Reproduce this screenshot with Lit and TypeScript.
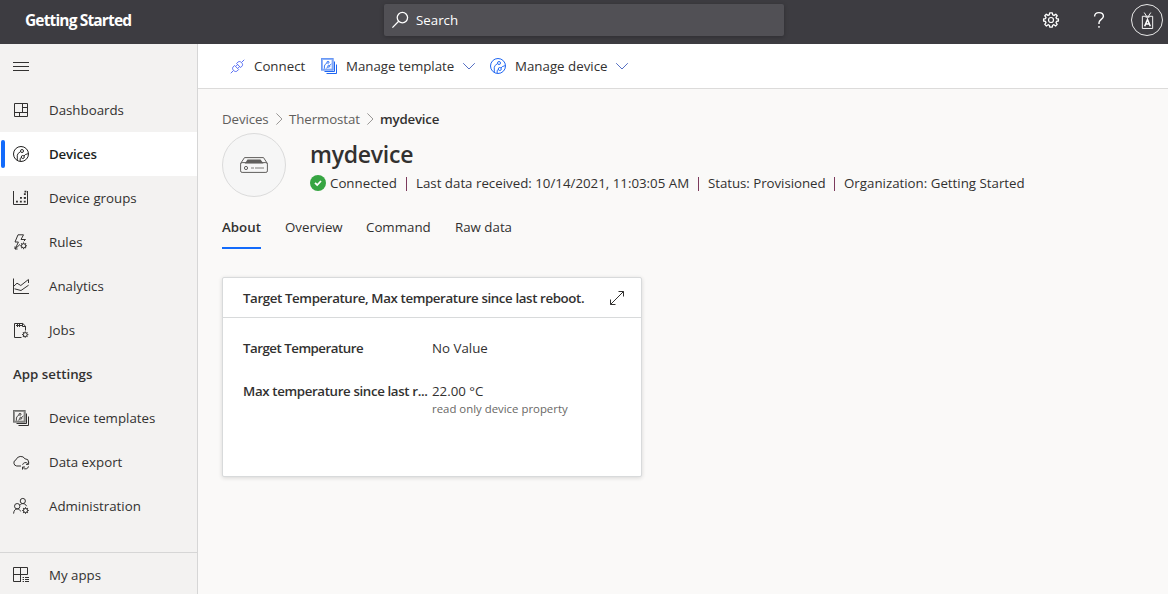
import { LitElement, html, svg, css, nothing } from "lit";
import { customElement, property } from "lit/decorators.js";
import { classMap } from "lit/directives/class-map.js";

const gear = (cx: number, cy: number, r: number) => svg`
  <circle cx=${cx} cy=${cy} r=${r * 0.62}></circle>
  ${[0, 45, 90, 135, 180, 225, 270, 315].map(
    (a) => svg`<path d="M${cx} ${cy - r * 0.62}V${cy - r}" transform="rotate(${a} ${cx} ${cy})"></path>`
  )}`;

const circuit = svg`
  <g stroke-width="0.95">
    <circle cx="9" cy="5" r="1.5"></circle>
    <circle cx="9.8" cy="11" r="1.5"></circle>
    <path d="M7.5 5.6L5.2 7.4L4.3 9.2V14.2M8.3 11.4L7.2 12.4V15M11 10L12.3 8.6L15.3 7.6"></path>
  </g>`;

const template = svg`
  <rect x="1" y="1" width="10.6" height="10.6" stroke-width="2" stroke-opacity="0.5"></rect>
  <rect x="0.5" y="0.5" width="11.6" height="11.6" stroke-opacity="0.35"></rect>
  <g stroke-width="0.9">
    <circle cx="7" cy="4.3" r="1"></circle><circle cx="7.8" cy="8.2" r="1"></circle>
    <path d="M6 4.8L4.2 6.4L3.4 8V10.6M6.8 8.6L5.7 10.4M8.7 7.4L10.4 6"></path>
  </g>
  <path d="M13.5 3.5V13.5H3.5M15.5 6.5V15.5H5.5"></path>`;

const glyphs: Record<string, unknown> = {
  menu: svg`<path d="M0 4.5H16M0 8.5H16M0 12.5H16"></path>`,
  dashboards: svg`<path d="M1.5 1.5H14.5V14.5H1.5ZM9.5 1.5V10M1.5 10.5H14.5M9.5 5.5H14.5M6.5 10V14.5"></path>`,
  devices: svg`<circle cx="8" cy="8" r="7.5"></circle>${circuit}`,
  groups: svg`<path d="M0.5 1V14.5H14.5V1"></path>
    <path stroke-width="1.8" stroke-dasharray="1.9 2" d="M3 11.7H14M7 7.9H14"></path>
    <path stroke-width="1.8" d="M10.9 4.2H12.8M10.9 7.9H12.8M11.5 1.6H13.4"></path>`,
  rules: svg`<path d="M5 0.8H10.5L8 5.5H12.5L10.8 7.2M5 0.8L2 8H5.4L2.2 15L7 10.4M2 15V12.4M2 15H4.6"></path>${gear(10.6, 11.8, 3.4)}`,
  analytics: svg`<path d="M0.5 0.5V15.5H16M0.8 8.2L4 5.2L7.8 7.5L15.4 1.5M1.5 10.8L8 12.5L15.6 7.2M15.5 1.5V5"></path>`,
  jobs: svg`<path d="M8.5 15.5H1.5V1.5H9.8L12.5 4.2V8.5M9.5 1.5V4.5H12.5M3 3.5H9M4.5 2V5M6.5 2V5"></path>${gear(12.2, 12.6, 3.2)}`,
  templates: template,
  export: svg`<path d="M8 12H3.7A3.2 3.2 0 0 1 3 5.8A5 5 0 0 1 12 4.8A3.6 3.6 0 0 1 15.7 8.3"></path>
    <path d="M9.6 10.8A3 3 0 0 1 14.8 9.6M15.6 7.8V10.4H13M15.5 12.4A3 3 0 0 1 10.2 13.8M9.5 15.6V13H12"></path>`,
  admin: svg`<circle cx="9.8" cy="3" r="2.6"></circle><circle cx="4.2" cy="8.2" r="2.7"></circle>
    <path d="M0.6 15.6C0.8 12.6 2.2 10.9 4.2 10.9C5.8 10.9 7 11.8 7.6 13.4M7 7.2C7.8 5.9 8.8 5.6 9.8 5.6C11.6 5.6 12.9 6.5 13.6 8.2"></path>${gear(12.5, 12.5, 3.3)}`,
  apps: svg`<path d="M8 14.5H0.5V0.5H14.5V7.5M7.5 0.5V14.5M0.5 7.5H14.5M9.6 10.5H11M12 10.5H16M9.6 12.5H11M12 12.5H16M9.6 14.5H11M12 14.5H16"></path>`,
  connect: svg`<path d="M0.8 15.2L3.6 12.4M12.4 3.6L15.2 0.8M6.4 7.6L8.1 5.9M8.6 9.7L10.3 8"></path>
    <path d="M4.9 6.9L9.2 11.2L7.6 12.8C5.4 14.9 1.2 10.7 3.3 8.5ZM7 4.8L11.3 9.1L12.9 7.5C14.9 5.3 10.7 1.2 8.6 3.2Z"></path>`,
  down: svg`<path d="M2.2 5.2L8 11L13.8 5.2"></path>`,
  right: svg`<path d="M5 1.6L11.4 8L5 14.4"></path>`,
  search: svg`<circle cx="10.4" cy="5.6" r="5.2" stroke-width="1.3"></circle><path stroke-width="1.3" d="M6.7 9.3L0.4 15.6"></path>`,
  settings: svg`<circle cx="8" cy="8" r="2.5" stroke-width="1.2"></circle>
    <path stroke-width="1.3" stroke-linejoin="round" d="M6.7 0.8H9.3L9.7 2.8L11.1 3.4L12.8 2.2L14.2 3.8L13 5.4L13.5 6.6L15.4 7V9L13.5 9.4L13 10.7L14.2 12.4L12.6 14L10.9 12.7L9.6 13.3L9.2 15.2H6.8L6.4 13.3L5.1 12.7L3.4 14L1.8 12.4L3 10.7L2.5 9.4L0.6 9V7L2.5 6.6L3 5.4L1.8 3.8L3.3 2.2L5 3.4L6.3 2.8Z"></path>`,
  help: svg`<path stroke-width="1.4" d="M3.6 4.6C3.6 1.9 5.4 0.6 7.9 0.6S12.4 2 12.4 4.2C12.4 7.2 8 7.6 8 10.8V12M8 14V15.8"></path>`,
  badge: svg`<path d="M2.5 3.5H13.5V16.5H2.5ZM4.5 -0.5L7 3.5M11.5 -0.5L9 3.5M6 4.5H10"></path>
    <path stroke-width="1.6" d="M5 14.2L8 7L11 14.2M6 11.8H10"></path>`,
  expand: svg`<path d="M1.5 14.5L14.5 1.5M9.5 1.5H14.5V6.5M1.5 9.5V14.5H6.5"></path>`,
  check: svg`<circle cx="8" cy="8" r="8" fill="#36a542" stroke="none"></circle><path stroke="#fff" stroke-width="1.8" d="M5 7.9L7.2 10L11 6"></path>`,
};

@customElement("app-icon")
class AppIcon extends LitElement {
  @property() name = "";
  static styles = css`
    :host { display: block; width: 16px; height: 16px; flex: none; }
    svg { display: block; width: 100%; height: 100%; overflow: visible; }
  `;
  render() {
    return html`<svg viewBox="0 0 16 16" fill="none" stroke="currentColor" stroke-width="1">${glyphs[this.name]}</svg>`;
  }
}

const nav = [
  ["dashboards", "Dashboards"],
  ["devices", "Devices"],
  ["groups", "Device groups"],
  ["rules", "Rules"],
  ["analytics", "Analytics"],
  ["jobs", "Jobs"],
];
const settings = [
  ["templates", "Device templates"],
  ["export", "Data export"],
  ["admin", "Administration"],
];

@customElement("app-root")
class AppRoot extends LitElement {
  static styles = css`
    * { box-sizing: border-box; }
    :host {
      display: flex; flex-direction: column; width: 1168px; height: 594px; overflow: hidden;
      font: 13.3px/20px "Open Sans", "Noto Sans", sans-serif; color: #323130; background: #faf9f8;
      white-space: nowrap;
    }
    header { height: 44px; flex: none; display: grid; grid-template-columns: 384px 400px 1fr; background: #3d3c41; color: #fff; }
    .brand { padding: 10px 0 0 25px; font-size: 15.5px; font-weight: 700; letter-spacing: -0.85px; }
    .search { margin-top: 4px; height: 32px; display: flex; align-items: center; gap: 8px; padding-left: 8px; border-radius: 2px; background: #515055; box-shadow: 0 1px 4px rgba(0,0,0,.25); }
    .tools { display: flex; align-items: center; justify-content: flex-end; height: 40px; padding-right: 5px; }
    .tools .gear { margin-right: 32px; }
    .tools .help { margin-right: 24px; }
    .avatar { width: 32px; height: 32px; border: 1px solid #e8e8e8; border-radius: 50%; display: grid; place-items: center; }
    .avatar app-icon { width: 15px; height: 15px; }
    .body { flex: 1; display: flex; min-height: 0; }
    nav { width: 198px; flex: none; display: flex; flex-direction: column; background: #f3f2f1; border-right: 1px solid #d6d6d6; }
    .item { height: 44px; flex: none; display: flex; align-items: center; gap: 20px; padding-left: 13px; }
    .item.active { background: #fff; position: relative; font-weight: 600; letter-spacing: -0.15px; color: #201f1e; }
    .item.active::before { content: ""; position: absolute; left: 1px; top: 8px; width: 4px; height: 28px; border-radius: 2px; background: #136bfb; }
    .group { font-weight: 600; }
    .apps { margin-top: 24px; border-top: 1px solid #d6d6d6; height: 45px; }
    main { flex: 1; min-width: 0; display: flex; flex-direction: column; }
    .bar { height: 45px; flex: none; background: #fff; border-bottom: 1px solid #dcdbda; display: flex; align-items: center; padding-left: 32px; }
    .bar app-icon { color: #1f66f2; }
    .bar app-icon.plug { width: 15px; height: 15px; margin-right: -1px; color: #4f66f2; }
    .bar app-icon.chev { color: #5670c4; }
    .c1 { width: 67px; margin-left: 10px; }
    .c2 { width: 109px; margin: 0 6px 0 9px; letter-spacing: -0.03px; }
    .c3 { width: 93px; margin: 0 6px 0 9px; }
    .chev { margin-right: 13px; }
    .content { padding: 20px 24px 0; display: flex; flex-direction: column; }
    .crumbs { display: flex; align-items: center; color: #605e5c; height: 20px; letter-spacing: -0.1px; }
    .crumbs b { font-weight: 600; color: #323130; letter-spacing: -0.2px; }
    .crumbs app-icon { width: 14px; height: 14px; margin: 0 3px 0 4px; color: #8a8886; }
    .k1 { width: 46px; }
    .k2 { width: 70px; }
    .device { display: flex; gap: 24px; margin-top: 4px; height: 64px; }
    .thumb { width: 64px; height: 64px; flex: none; border: 1px solid #dbdbdb; border-radius: 50%; background: #f6f6f6; display: grid; place-items: center; }
    .thumb svg { display: block; }
    h1 { margin: 5px 0 0; font-size: 23px; line-height: 32px; font-weight: 600; letter-spacing: -0.25px; }
    .status { display: flex; align-items: center; margin-top: 3px; }
    .status i { width: 1px; height: 14px; background: #7c3a5c; margin: 1px 9px 0; flex: none; }
    .s1 { width: 67px; margin-left: 4px; }
    .s2 { width: 273px; }
    .s3 { width: 117px; letter-spacing: -0.05px; }
    .tabs { display: flex; gap: 24px; margin-top: 20px; }
    .tabs span { height: 32px; }
    .tabs .on { font-weight: 600; border-bottom: 2px solid #136bfb; }
    .t1 { width: 39px; } .t2 { width: 57px; } .t3 { width: 65px; }
    .card { margin-top: 28px; width: 420px; height: 200px; background: #fff; border: 1px solid #d8dadb; border-radius: 2px; box-shadow: 0 1px 4px rgba(0,0,0,.14); }
    .card .head { height: 40px; border-bottom: 1px solid #d8dadb; display: flex; align-items: center; justify-content: space-between; padding: 0 16px 0 20px; font-weight: 600; letter-spacing: -0.39px; }
    .rows { margin: 0; display: grid; grid-template-columns: 189px 1fr; padding: 20px 20px 0; row-gap: 23px; }
    .rows dt, .rows dd { margin: 0; }
    .rows dt { font-weight: 600; letter-spacing: -0.5px; }
    .rows dt.long { letter-spacing: -0.37px; }
    .rows small { display: block; font-size: 11.4px; line-height: 16px; color: #696765; }
  `;

  private item([icon, label]: string[], extra = "") {
    return html`<div class=${classMap({ item: true, active: label === "Devices", [extra || "item"]: true })}>
      <app-icon name=${icon}></app-icon>${label ? html`<span>${label}</span>` : nothing}
    </div>`;
  }

  render() {
    return html`
      <header>
        <div class="brand">Getting Started</div>
        <div class="search"><app-icon name="search"></app-icon><span>Search</span></div>
        <div class="tools">
          <app-icon class="gear" name="settings"></app-icon>
          <app-icon class="help" name="help"></app-icon>
          <div class="avatar"><app-icon name="badge"></app-icon></div>
        </div>
      </header>
      <div class="body">
        <nav>
          ${this.item(["menu", ""])} ${nav.map((n) => this.item(n))}
          <div class="item group">App settings</div>
          ${settings.map((n) => this.item(n))} ${this.item(["apps", "My apps"], "apps")}
        </nav>
        <main>
          <div class="bar">
            <app-icon class="plug" name="connect"></app-icon><span class="c1">Connect</span>
            <app-icon name="templates"></app-icon><span class="c2">Manage template</span><app-icon class="chev" name="down"></app-icon>
            <app-icon name="devices"></app-icon><span class="c3">Manage device</span><app-icon class="chev" name="down"></app-icon>
          </div>
          <div class="content">
            <div class="crumbs">
              <span class="k1">Devices</span><app-icon name="right"></app-icon>
              <span class="k2">Thermostat</span><app-icon name="right"></app-icon><b>mydevice</b>
            </div>
            <div class="device">
              <div class="thumb">
                <svg width="28" height="16" viewBox="0 0 28 16" fill="none" stroke="#605e5c">
                  <path d="M0.6 6.5L4.5 0.6H23.5L27.4 6.5"></path>
                  <rect x="0.6" y="5.6" width="26.8" height="9.8" rx="1.5"></rect>
                  <path fill="#605e5c" stroke="none" d="M7.5 2.6H20.5L23.5 6.4H4.8Z"></path>
                  <circle cx="6" cy="11" r="1.6"></circle>
                  <path stroke="#a5a4a3" stroke-width="1.6" d="M11 11H14M15 11H24"></path>
                </svg>
              </div>
              <div>
                <h1>mydevice</h1>
                <div class="status">
                  <app-icon name="check"></app-icon><span class="s1">Connected</span><i></i>
                  <span class="s2">Last data received: 10/14/2021, 11:03:05 AM</span><i></i>
                  <span class="s3">Status: Provisioned</span><i></i>
                  <span>Organization: Getting Started</span>
                </div>
              </div>
            </div>
            <div class="tabs">
              <span class="t1 on">About</span><span class="t2">Overview</span><span class="t3">Command</span><span>Raw data</span>
            </div>
            <section class="card">
              <div class="head"><span>Target Temperature, Max temperature since last reboot.</span><app-icon name="expand"></app-icon></div>
              <dl class="rows">
                <dt>Target Temperature</dt><dd>No Value</dd>
                <dt class="long">Max temperature since last r...</dt><dd>22.00 °C<small>read only device property</small></dd>
              </dl>
            </section>
          </div>
        </main>
      </div>`;
  }
}
